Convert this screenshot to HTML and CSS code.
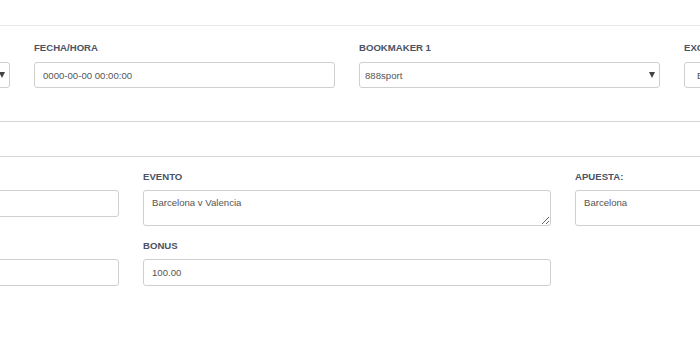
FILE: index.html
```html
<!DOCTYPE html>
<html lang="es">
  <head>
    <meta charset="utf-8">
    <link rel="stylesheet" href="styles.css">
    <title>Nueva apuesta</title>
  </head>

  <body>
    <div class="topbar"></div>

    <section class="panel panel-top">
      <div class="sheet grid-4">
        <div class="field">
          <label>DEPORTE</label>
          <div class="select"><select><option>Fútbol</option></select></div>
        </div>
        <div class="field">
          <label>FECHA/HORA</label>
          <input class="control" type="text" value="0000-00-00 00:00:00">
        </div>
        <div class="field">
          <label>BOOKMAKER 1</label>
          <div class="select"><select><option>888sport</option></select></div>
        </div>
        <div class="field">
          <label>EXCHANGE</label>
          <div class="select select-wide"><select><option>Betfair</option></select></div>
        </div>
      </div>
    </section>

    <section class="panel panel-bottom">
      <div class="sheet grid-3">
        <div class="field">
          <label>COMPETICIÓN</label>
          <input class="control" type="text" value="La Liga">
        </div>
        <div class="field">
          <label>EVENTO</label>
          <textarea class="control area">Barcelona v Valencia</textarea>
        </div>
        <div class="field">
          <label>APUESTA:</label>
          <textarea class="control area">Barcelona</textarea>
        </div>
        <div class="field">
          <label>CUOTA</label>
          <input class="control" type="text" value="">
        </div>
        <div class="field">
          <label>BONUS</label>
          <input class="control" type="text" value="100.00">
        </div>
      </div>
    </section>
  </body>
</html>
```

FILE: styles.css
```css
body {
  margin: 0;
  background-color: #fff;
  font-family: "Liberation Sans", Arial, sans-serif;
  overflow: hidden;
}

.topbar {
  height: 25px;
  border-bottom: 1px solid #e8e8e8;
}

.panel-top {
  padding: 15px 0 33px;
  border-bottom: 1px solid #d6d6d6;
}

.panel-bottom {
  margin-top: 34px;
  padding-top: 13px;
  border-top: 1px solid #d6d6d6;
}

/* the form is wider than the window, scrolled a bit to the right */
.sheet {
  display: grid;
  column-gap: 24px;
  align-items: start;
}

.grid-4 {
  margin-left: -291px;
  grid-template-columns: repeat(4, 301px);
}

.grid-3 {
  margin-left: -289px;
  grid-template-columns: repeat(3, 408px);
  row-gap: 13px;
}

.field {
  display: flex;
  flex-direction: column;
}

.field label {
  font-size: 9.6px;
  line-height: 13px;
  font-weight: bold;
  color: #4b5364;
  margin-bottom: 8px;
}

.panel-bottom .field label {
  margin-bottom: 7px;
}

.control {
  box-sizing: border-box;
  width: 100%;
  height: 27px;
  padding: 0 8px;
  border: 1px solid #cfcfcf;
  border-radius: 3px;
  font-family: "Liberation Sans", Arial, sans-serif;
  font-size: 9.6px;
  color: #555;
  background-color: #fff;
}

.panel-top .control {
  height: 26px;
}

.area {
  height: 36px;
  padding: 6px 8px;
  line-height: 12px;
  resize: vertical;
}

.select {
  position: relative;
}

.select select {
  box-sizing: border-box;
  width: 100%;
  height: 26px;
  padding: 0 5px;
  border: 1px solid #cfcfcf;
  border-radius: 3px;
  font-family: "Liberation Sans", Arial, sans-serif;
  font-size: 9.6px;
  color: #555;
  background-color: #fff;
  -webkit-appearance: none;
  appearance: none;
}

.select-wide select {
  padding-left: 12px;
}

.select::after {
  content: "";
  position: absolute;
  right: 5px;
  top: 10px;
  border-left: 3px solid transparent;
  border-right: 3px solid transparent;
  border-top: 6px solid #444;
}
```
